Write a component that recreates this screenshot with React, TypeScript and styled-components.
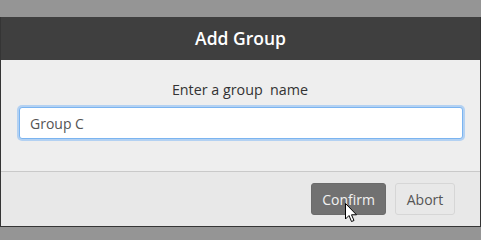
import React from "react";
import styled, { createGlobalStyle } from "styled-components";

const Global = createGlobalStyle`
  html, body { margin: 0; padding: 0; background: #959595; }
  body { font-family: "Open Sans", "Noto Sans", sans-serif; }
  * { box-sizing: border-box; }
`;

const Page = styled.div`
  width: 481px;
  height: 240px;
  padding-top: 17px;
  position: relative;
  overflow: hidden;
`;

const Dialog = styled.div`
  width: 481px;
  border: 1px solid #353535;
  border-top: none;
  display: flex;
  flex-direction: column;
`;

const Header = styled.div`
  height: 43px;
  background: #3f3f3f;
  color: #ffffff;
  display: flex;
  align-items: center;
  justify-content: center;
  font-size: 17.5px;
  font-weight: 600;
  padding-bottom: 1px;
`;

const Body = styled.div`
  background: #eeeeee;
  padding: 20px 18px 32px 17px;
  display: flex;
  flex-direction: column;
  align-items: stretch;
  border-bottom: 1px solid #c9c9c9;
`;

const Label = styled.div`
  text-align: center;
  font-size: 14.3px;
  line-height: 20px;
  color: #333333;
  white-space: pre;
  margin-bottom: 7px;
`;

const Input = styled.input`
  height: 32px;
  width: 100%;
  border: 1px solid #7bb4f0;
  border-radius: 3px;
  box-shadow: 0 0 0 2px rgba(140, 190, 245, 0.6);
  background: #ffffff;
  padding: 0 10px;
  margin: 0 1px;
  font-family: "Open Sans", "Noto Sans", sans-serif;
  font-size: 14px;
  color: #555555;
  outline: none;
`;

const Footer = styled.div`
  background: #e8e8e8;
  height: 54px;
  display: flex;
  align-items: center;
  justify-content: flex-end;
  gap: 9px;
  padding: 0 25px 0 0;
`;

const Button = styled.button<{ $primary?: boolean }>`
  height: 32px;
  padding: 0 10px;
  border-radius: 3px;
  font-family: "Open Sans", "Noto Sans", sans-serif;
  font-size: 14px;
  border: 1px solid ${(p) => (p.$primary ? "#6b6b6b" : "#d6d6d6")};
  background: ${(p) => (p.$primary ? "#717171" : "#e8e8e8")};
  color: ${(p) => (p.$primary ? "#f2f2f2" : "#555555")};
  min-width: ${(p) => (p.$primary ? "74px" : "60px")};
`;

const Cursor = styled.svg`
  position: absolute;
  left: 345px;
  top: 203px;
  width: 13px;
  height: 20px;
`;

export default function App() {
  return (
    <>
      <Global />
      <Page>
        <Dialog>
          <Header>Add Group</Header>
          <Body>
            <Label>{"Enter a group  name"}</Label>
            <Input defaultValue="Group C" />
          </Body>
          <Footer>
            <Button $primary>Confirm</Button>
            <Button>Abort</Button>
          </Footer>
        </Dialog>
        <Cursor viewBox="0 0 13 20">
          <path
            d="M0.5 0.5 L0.5 16 L4 12.5 L6.5 18.5 L9 17.5 L6.5 11.8 L11.5 11.8 Z"
            fill="#ffffff"
            stroke="#000000"
            strokeWidth="1"
            strokeLinejoin="miter"
          />
        </Cursor>
      </Page>
    </>
  );
}
